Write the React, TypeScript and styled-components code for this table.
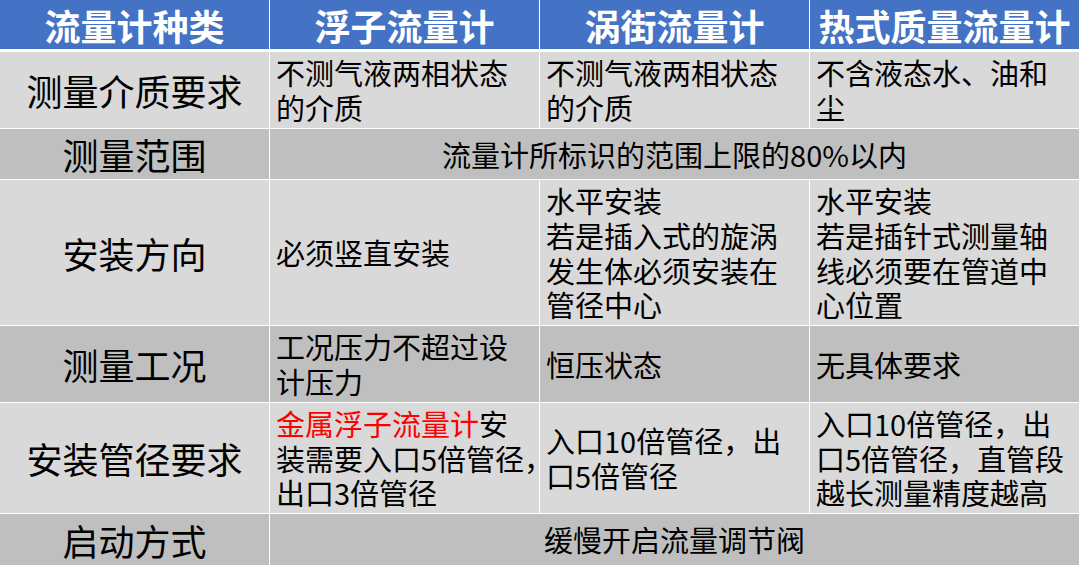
import React, { FC, ReactNode } from "react";
import styled, { createGlobalStyle, css } from "styled-components";

const GlobalStyle = createGlobalStyle`
  html, body {
    margin: 0;
    padding: 0;
    background: #ffffff;
  }
  body {
    font-family: "Noto Sans CJK SC", "Noto Sans", sans-serif;
    color: #000000;
  }
`;

type Tone = "light" | "dark";

const toneBg = (t: Tone) => (t === "dark" ? "#bfbfbf" : "#d9d9d9");

const Table = styled.div`
  display: grid;
  width: 1079px;
  grid-template-columns: repeat(4, 269px);
  grid-template-rows: 51px 76px 50px 145px 76px 110px 51px;
  column-gap: 1px;
  row-gap: 1px;
  background: #ffffff;
`;

const HeadCell = styled.div`
  display: flex;
  align-items: center;
  justify-content: center;
  margin-bottom: 2px;
  background: #4472c4;
  color: #ffffff;
  font-size: 36px;
  font-weight: 700;
  line-height: 1;
  white-space: nowrap;
`;

const LabelCell = styled.div<{ $tone: Tone }>`
  display: flex;
  align-items: center;
  justify-content: center;
  background: ${(p) => toneBg(p.$tone)};
  font-size: 36px;
  line-height: 1;
  white-space: nowrap;
`;

const Cell = styled.div<{ $tone: Tone; $merged?: boolean }>`
  display: flex;
  flex-direction: column;
  justify-content: center;
  padding: 0 6px;
  background: ${(p) => toneBg(p.$tone)};
  font-size: 29px;
  line-height: 1.2;
  ${(p) =>
    p.$merged &&
    css`
      grid-column: span 3;
      align-items: center;
    `}
`;

const Line = styled.div`
  white-space: nowrap;
`;

const Red = styled.span`
  color: #ff0000;
`;

interface IRow {
  label: string;
  tone: Tone;
  merged?: string;
  cells?: ReactNode[][];
}

const headers = ["流量计种类", "浮子流量计", "涡街流量计", "热式质量流量计"];

const rows: IRow[] = [
  {
    label: "测量介质要求",
    tone: "light",
    cells: [
      ["不测气液两相状态", "的介质"],
      ["不测气液两相状态", "的介质"],
      ["不含液态水、油和", "尘"],
    ],
  },
  {
    label: "测量范围",
    tone: "dark",
    merged: "流量计所标识的范围上限的80%以内",
  },
  {
    label: "安装方向",
    tone: "light",
    cells: [
      ["必须竖直安装"],
      ["水平安装", "若是插入式的旋涡", "发生体必须安装在", "管径中心"],
      ["水平安装", "若是插针式测量轴", "线必须要在管道中", "心位置"],
    ],
  },
  {
    label: "测量工况",
    tone: "dark",
    cells: [["工况压力不超过设", "计压力"], ["恒压状态"], ["无具体要求"]],
  },
  {
    label: "安装管径要求",
    tone: "light",
    cells: [
      [
        <>
          <Red>金属浮子流量计</Red>安
        </>,
        "装需要入口5倍管径，",
        "出口3倍管径",
      ],
      ["入口10倍管径，出", "口5倍管径"],
      ["入口10倍管径，出", "口5倍管径，直管段", "越长测量精度越高"],
    ],
  },
  {
    label: "启动方式",
    tone: "dark",
    merged: "缓慢开启流量调节阀",
  },
];

const App: FC = () => {
  return (
    <>
      <GlobalStyle />
      <Table>
        {headers.map((h) => (
          <HeadCell key={h}>{h}</HeadCell>
        ))}
        {rows.map((r) => (
          <React.Fragment key={r.label}>
            <LabelCell $tone={r.tone}>{r.label}</LabelCell>
            {r.merged ? (
              <Cell $tone={r.tone} $merged>
                <Line>{r.merged}</Line>
              </Cell>
            ) : (
              r.cells?.map((lines, ci) => (
                <Cell key={ci} $tone={r.tone}>
                  {lines.map((l, li) => (
                    <Line key={li}>{l}</Line>
                  ))}
                </Cell>
              ))
            )}
          </React.Fragment>
        ))}
      </Table>
    </>
  );
};

export default App;
